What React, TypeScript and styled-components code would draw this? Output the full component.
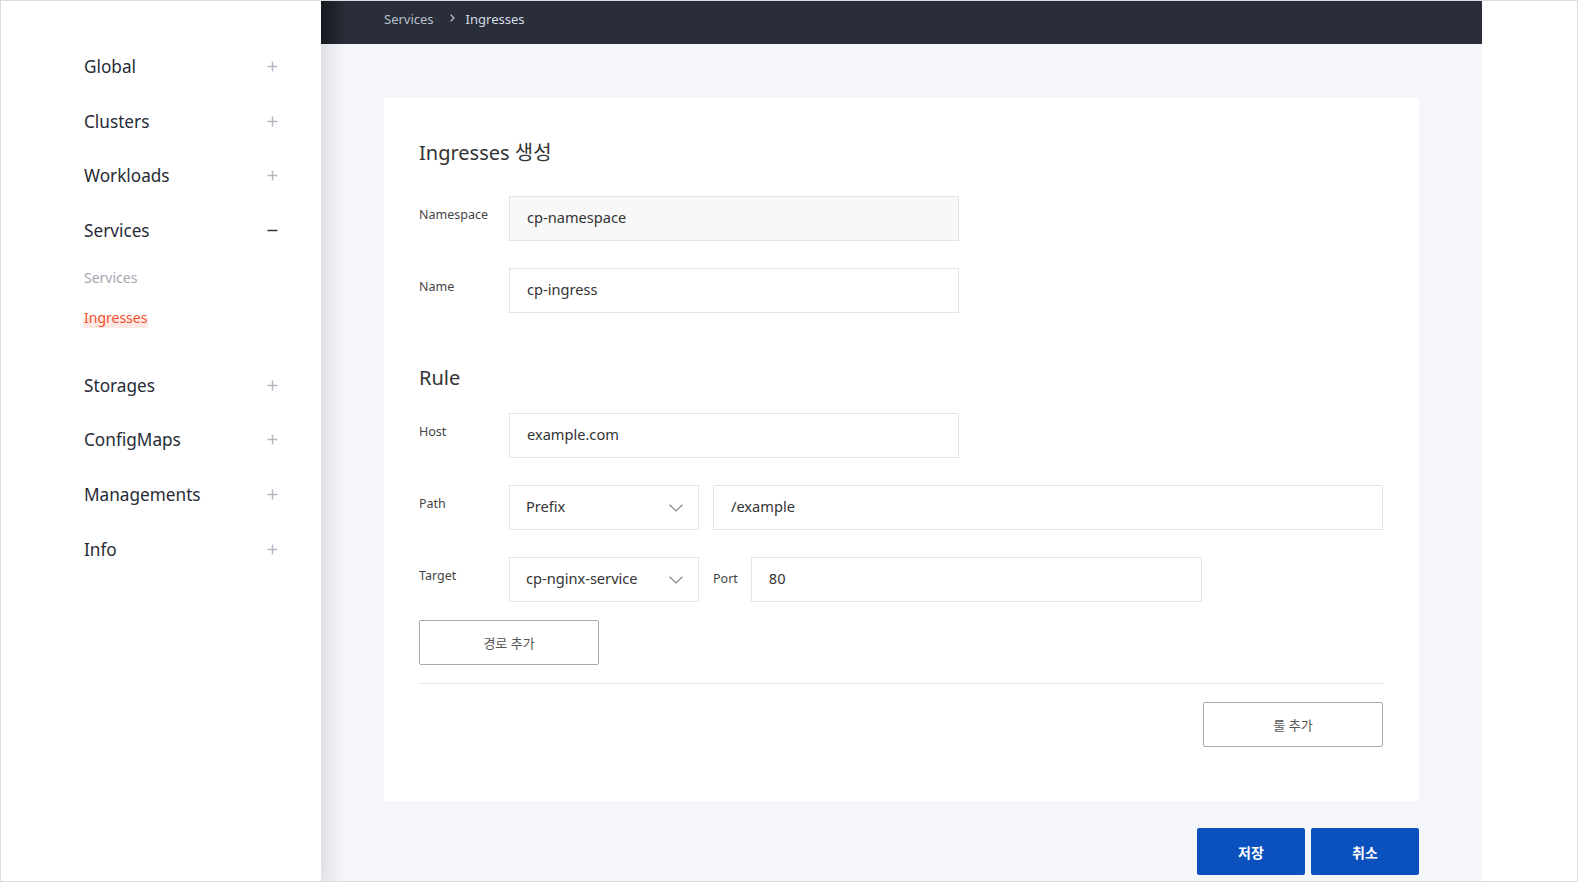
import React from "react";
import styled, { createGlobalStyle } from "styled-components";

const GlobalStyle = createGlobalStyle`
  html, body { margin: 0; padding: 0; }
  body {
    font-family: "Noto Sans", "Noto Sans CJK KR", sans-serif;
    color: #333;
    background: #fff;
  }
  * { box-sizing: border-box; }
`;

const Frame = styled.div`
  width: 1578px;
  height: 882px;
  border: 1px solid #dcdcdc;
  display: flex;
  overflow: hidden;
  background: #fff;
`;

const Sidebar = styled.nav`
  width: 320px;
  flex: none;
  background: #fff;
  position: relative;
  z-index: 1;
  box-shadow: 4px 0 22px rgba(30, 40, 70, 0.07);
  padding: 38px 43px 0 83px;
`;

const NavList = styled.ul`
  list-style: none;
  margin: 0;
  padding: 0;
`;

const NavRow = styled.div`
  height: 54.7px;
  display: flex;
  align-items: center;
  justify-content: space-between;
  font-size: 17.2px;
  color: #262b36;
`;

const SubList = styled.ul`
  list-style: none;
  margin: 0;
  padding: 0 0 20px;
`;

const SubItem = styled.li<{ $active?: boolean }>`
  height: 40px;
  display: flex;
  align-items: center;
  font-size: 14px;
  color: ${(p) => (p.$active ? "#f1502f" : "#a3a8b3")};
`;

const Highlight = styled.span`
  line-height: 20px;
  padding: 0 1px;
  margin-left: -1px;
  background: linear-gradient(to bottom, transparent 50%, #fde8e3 50%);
`;

const Toggle = styled.svg<{ $open?: boolean }>`
  width: 11px;
  height: 11px;
  stroke: ${(p) => (p.$open ? "#333" : "#b3b8c2")};
  stroke-width: 1.5;
  fill: none;
`;

const Main = styled.div`
  width: 1161px;
  flex: none;
  display: flex;
  flex-direction: column;
  background: #f5f6fa;
`;

const Header = styled.header`
  height: 43px;
  flex: none;
  display: flex;
  align-items: center;
  padding: 0 0 7px 63px;
  background: linear-gradient(to right, #181a20 0, #292e3a 26px);
  font-size: 13px;
`;

const Crumb = styled.span<{ $current?: boolean }>`
  color: ${(p) => (p.$current ? "#d6dbe4" : "#b9c0cc")};
`;

const CrumbSep = styled.svg`
  width: 5px;
  height: 8px;
  margin: -3px 11px 0 16px;
  stroke: #c2c8d2;
  stroke-width: 1.2;
  fill: none;
`;

const Content = styled.div`
  flex: 1;
  padding: 54px 63px 0;
  background: linear-gradient(to right, #e9eaef 0, #f5f6fa 24px);
`;

const Card = styled.section`
  background: #fff;
  padding: 41px 36px 54px 35px;
  display: flex;
  flex-direction: column;
`;

const Heading = styled.h2<{ $gap?: number }>`
  margin: ${(p) => p.$gap ?? 0}px 0 0;
  font-size: 20px;
  line-height: 28px;
  font-weight: 400;
  color: #333;
`;

const FieldRow = styled.div<{ $gap: number }>`
  display: flex;
  align-items: flex-start;
  margin-top: ${(p) => p.$gap}px;
`;

const Label = styled.label`
  width: 90px;
  flex: none;
  padding-top: 9px;
  font-size: 12.5px;
  line-height: 20px;
  color: #444;
`;

const Input = styled.div<{ $width?: number; $disabled?: boolean }>`
  height: 45px;
  ${(p) => (p.$width ? `width: ${p.$width}px; flex: none;` : "flex: 1;")}
  border: 1px solid #e4e4e4;
  background: ${(p) => (p.$disabled ? "#f8f8f8" : "#fff")};
  display: flex;
  align-items: center;
  padding: 0 16px 3px 17px;
  font-size: 14.6px;
  color: #333;
`;

const Select = styled.div`
  width: 190px;
  height: 45px;
  flex: none;
  border: 1px solid #e4e4e4;
  background: #fff;
  display: flex;
  align-items: center;
  justify-content: space-between;
  padding: 0 15px 3px 16px;
  font-size: 14.6px;
  color: #333;
  margin-right: 14px;
`;

const Chevron = styled.svg`
  width: 14px;
  height: 8px;
  margin-top: 3px;
  stroke: #888;
  stroke-width: 1.2;
  fill: none;
`;

const InlineLabel = styled.span`
  align-self: center;
  font-size: 12.5px;
  color: #444;
  margin-right: 13px;
  padding-bottom: 2px;
`;

const OutlineButton = styled.button<{ $gap: number; $right?: boolean }>`
  width: 180px;
  height: 45px;
  margin-top: ${(p) => p.$gap}px;
  align-self: ${(p) => (p.$right ? "flex-end" : "flex-start")};
  border: 1px solid #a9a9a9;
  border-radius: 2px;
  background: #fff;
  font-family: inherit;
  font-size: 13px;
  color: #555;
  cursor: pointer;
`;

const Divider = styled.hr`
  margin: 18px 0 0;
  border: 0;
  border-top: 1px solid #e6e6e6;
  height: 0;
`;

const Actions = styled.div`
  display: flex;
  justify-content: flex-end;
  gap: 6px;
  margin-top: 27px;
`;

const PrimaryButton = styled.button`
  width: 108px;
  height: 47px;
  border: 0;
  border-radius: 2px;
  background: #0a51be;
  color: #fff;
  font-family: inherit;
  font-size: 14px;
  font-weight: 700;
  cursor: pointer;
`;

const Filler = styled.div`
  flex: 1;
  background: #fff;
`;

const PlusIcon = () => (
  <Toggle viewBox="0 0 11 11">
    <line x1="5.5" y1="0.5" x2="5.5" y2="10.5" />
    <line x1="0.5" y1="5.5" x2="10.5" y2="5.5" />
  </Toggle>
);

const MinusIcon = () => (
  <Toggle viewBox="0 0 11 11" $open>
    <line x1="0.5" y1="5.5" x2="10.5" y2="5.5" />
  </Toggle>
);

const DownIcon = () => (
  <Chevron viewBox="0 0 14 8">
    <polyline points="0.5,0.8 7,7 13.5,0.8" />
  </Chevron>
);

const navTop = ["Global", "Clusters", "Workloads"];
const navBottom = ["Storages", "ConfigMaps", "Managements", "Info"];

export default function App() {
  return (
    <>
      <GlobalStyle />
      <Frame>
        <Sidebar>
          <NavList>
            {navTop.map((n) => (
              <li key={n}>
                <NavRow>
                  <span>{n}</span>
                  <PlusIcon />
                </NavRow>
              </li>
            ))}
            <li>
              <NavRow>
                <span>Services</span>
                <MinusIcon />
              </NavRow>
              <SubList>
                <SubItem>Services</SubItem>
                <SubItem $active>
                  <Highlight>Ingresses</Highlight>
                </SubItem>
              </SubList>
            </li>
            {navBottom.map((n) => (
              <li key={n}>
                <NavRow>
                  <span>{n}</span>
                  <PlusIcon />
                </NavRow>
              </li>
            ))}
          </NavList>
        </Sidebar>
        <Main>
          <Header>
            <Crumb>Services</Crumb>
            <CrumbSep viewBox="0 0 5 8">
              <polyline points="0.6,0.6 4,4 0.6,7.4" />
            </CrumbSep>
            <Crumb $current>Ingresses</Crumb>
          </Header>
          <Content>
            <Card>
              <Heading>Ingresses 생성</Heading>
              <FieldRow $gap={29}>
                <Label>Namespace</Label>
                <Input $width={450} $disabled>cp-namespace</Input>
              </FieldRow>
              <FieldRow $gap={27}>
                <Label>Name</Label>
                <Input $width={450}>cp-ingress</Input>
              </FieldRow>
              <Heading $gap={51}>Rule</Heading>
              <FieldRow $gap={21}>
                <Label>Host</Label>
                <Input $width={450}>example.com</Input>
              </FieldRow>
              <FieldRow $gap={27}>
                <Label>Path</Label>
                <Select>
                  <span>Prefix</span>
                  <DownIcon />
                </Select>
                <Input>/example</Input>
              </FieldRow>
              <FieldRow $gap={27}>
                <Label>Target</Label>
                <Select>
                  <span>cp-nginx-service</span>
                  <DownIcon />
                </Select>
                <InlineLabel>Port</InlineLabel>
                <Input $width={451}>80</Input>
              </FieldRow>
              <OutlineButton $gap={18}>경로 추가</OutlineButton>
              <Divider />
              <OutlineButton $gap={18} $right>
                룰 추가
              </OutlineButton>
            </Card>
            <Actions>
              <PrimaryButton>저장</PrimaryButton>
              <PrimaryButton>취소</PrimaryButton>
            </Actions>
          </Content>
        </Main>
        <Filler />
      </Frame>
    </>
  );
}
